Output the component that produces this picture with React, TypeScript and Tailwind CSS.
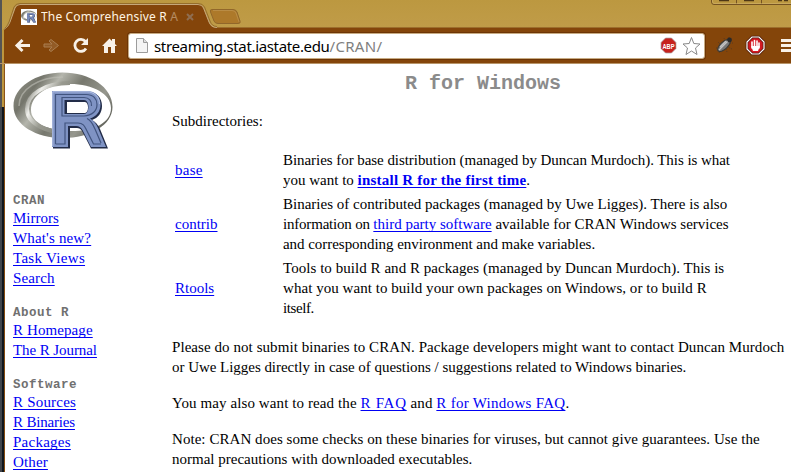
import type { ReactNode } from "react";

function Link({ children, className = "" }: { children: ReactNode; className?: string }) {
  return <a href="#" className={"text-[#0000f4] underline decoration-1 underline-offset-[2px] [text-decoration-skip-ink:none] " + className}>{children}</a>;
}

function Line({ children, className = "" }: { children: ReactNode; className?: string }) {
  return <div className={"h-5 whitespace-nowrap " + className}><span>{children}</span></div>;
}

function RLogo({ className, id }: { className: string; id: string }) {
  return (
    <svg className={className} viewBox="0 0 102 78" fill="none">
      <defs>
        <linearGradient id={id + "ring"} x1="10" y1="5" x2="90" y2="65" gradientUnits="userSpaceOnUse">
          <stop offset="0" stopColor="#8a8b80" />
          <stop offset=".15" stopColor="#74756b" />
          <stop offset=".3" stopColor="#b4b5ac" />
          <stop offset=".5" stopColor="#77786e" />
          <stop offset=".75" stopColor="#96978e" />
          <stop offset="1" stopColor="#55564e" />
        </linearGradient>
        <linearGradient id={id + "in"} x1="15" y1="20" x2="90" y2="60" gradientUnits="userSpaceOnUse">
          <stop offset="0" stopColor="#85867c" />
          <stop offset=".12" stopColor="#f0f0ec" />
          <stop offset=".3" stopColor="#999a90" />
          <stop offset="1" stopColor="#62635a" />
        </linearGradient>
      </defs>
      <path fillRule="evenodd" fill={"url(#" + id + "ring)"} d="M49.500 0.500C77 0.500 99.500 15 99.500 35C99.500 53 77 66 50 66C23 66 0.500 53 0.500 34C0.500 15 23 0.500 49.500 0.500ZM57 12C35 12 18 23 18 38C18 51 36 59 58 59C81 59 98 51 98 36C98 22 80 12 57 12Z" />
      <path stroke={"url(#" + id + "in)"} strokeWidth="4" d="M57 11C32 11 14 22 14 37C14 52 34 61 57 61" />
      <path stroke="#bfc0b8" strokeWidth="1.5" opacity=".6" d="M6 34C6 17 26 5 50 5" />
      <path fillRule="evenodd" fill="#222c48" d="M40 20H75C84 20 89 26 89 34C89 41 85 46 79 48C83 50 85 53 87 57L95 76.500H78L69 59C68 57 66 56 64 56H57V76.500H40ZM54 30V41H72C76 41 76 30 72 30Z" />
      <path fillRule="evenodd" fill="#7f93c4" d="M39 19H74C83 19 87.500 25 87.500 32.500C87.500 40 83 44.500 77 46.500C81 48.500 83 52 85 56L93 75H78L69.500 58C68 55.500 66 54 63 54H55V75H39ZM51.500 28V42H71C77 42 77 28 71 28Z" />
      <path stroke="#aebde2" strokeWidth="1" d="M39.800 74V19.800H74C81 19.800 86.500 25 86.500 32" />
      <path stroke="#41547f" strokeWidth="1.200" d="M42.500 72H52V51H65C70 51 71.500 54 73 57L80.500 72H88M42.500 72V22.500H73C80.500 22.500 84 27 84 32.500C84 39 79 43.500 71 44H49V25.500H71C76 25.500 79 29 78.500 34M74 46.500C79 49 80 53 82 57L88 71" />
    </svg>
  );
}

function TabStrip() {
  return (
    <div className="relative h-7 w-full">
      <svg className="absolute left-0 top-0" width="791" height="30" viewBox="0 0 791 30" fill="none">
        <defs>
          <linearGradient id="strip" x1="0" y1="0" x2="0" y2="1">
            <stop stopColor="#bc9840" /><stop offset="1" stopColor="#c09c49" />
          </linearGradient>
        </defs>
        <rect width="791" height="30" fill="url(#strip)" />
        <path d="M1 0V30" stroke="#555454" strokeWidth="2" />
        <path d="M5 27.500H791" stroke="#9c6f2d" />
        <rect x="5" y="28" width="786" height="2" fill="#84450a" />
        <path d="M4 30C7 28 8 26 10 22L15 8Q16.500 4.500 20 4.500H198Q202 4.500 203.500 8L209 22Q211 28 217 28V30Z" fill="#84450a" />
        <path d="M4 29C7 28 8 26 10 22L15 8Q16.500 4.500 20 4.500H198Q202 4.500 203.500 8L209 22Q211 27.500 217 27.500" stroke="#c5a77a" />
        <path d="M3.500 30C6 28 7 26 9 22L14 7Q15.500 3.500 20 3.500H198Q203 3.500 204.500 7L210 21Q212 26.500 217 26.500" stroke="#8b6224" strokeWidth=".8" />
        <path d="M212 9.500H233Q236 9.500 237 12L240 21Q241 23.500 238 23.500H218Q215 23.500 214 21L210.500 12Q209.500 9.500 212 9.500Z" fill="#ad792a" stroke="#91672a" />
        <path d="M213 10.500H232Q235 10.500 236 13L239 22" stroke="#bf9551" strokeWidth=".7" />
        <path d="M711.500 0V2Q711.500 4.500 714 4.500H791M736.500 0V4M761.500 0V4" stroke="#755322" />
        <path d="M712.500 0V2Q712.500 3.500 715 3.500H791" stroke="#d1b46d" strokeWidth=".6" />
        <path d="M719 .5H729M744 .5H754M778 .5H782M784 .5H788" stroke="#4d3616" strokeWidth="1.500" />
      </svg>
      <div className="relative flex h-[33px] items-center pl-[21px]">
        <div className="flex h-4 w-4 items-center justify-center bg-white"><RLogo id="fav" className="h-[15px] w-4" /></div>
        <div className="ml-1 w-[140px] overflow-hidden whitespace-nowrap font-['Noto_Sans',sans-serif] text-[12px] leading-4 tracking-[0.16px] text-[#fff4e3]">
          <span>The Comprehensive R <span className="opacity-40">A</span></span>
        </div>
        <svg className="ml-[5px]" width="8" height="8" viewBox="0 0 8 8"><path d="M1 1L7 7M7 1L1 7" stroke="#8f6e51" strokeWidth="2" /></svg>
      </div>
    </div>
  );
}

function Toolbar() {
  return (
    <div className="flex h-9 items-center border-b border-[#b79468] bg-[#84450a]">
      <svg className="shrink-0" width="128" height="35" viewBox="0 0 128 35" fill="none">
        <path d="M0 0H2V35H0Z" fill="#555454" />
        <path d="M2 0H4V35H2Z" fill="#bd963e" />
        <path d="M30 17.500H17M22.500 12L17 17.500L22.500 23" stroke="#f8f1e8" strokeWidth="3" />
        <path d="M44 16H52L49 13L51 11.500L58.500 17.500L51 23.500L49 22L52 19H44Z" fill="#925b26" stroke="#aa7e50" />
        <path d="M85.500 13.500A6 6 0 1 0 86 20.500" stroke="#f8f1e8" strokeWidth="2.800" />
        <path d="M88 10V17H81Z" fill="#f8f1e8" />
        <path d="M102 18L109.500 10.500L112 13V11H115V16L117 18H115V25H111V19H108V25H104V18Z" fill="#f8f1e8" />
      </svg>
      <div className="flex h-[26px] w-[577px] shrink-0 items-center rounded-[3px] border border-[#c7ab83] bg-white pl-[7px] shadow-[0_0_0_1px_#6d3505]">
        <svg width="12" height="16" viewBox="0 0 12 16"><path d="M.5 .5H7.500L11.500 4.500V14.500H.5Z" fill="#f4f4f4" stroke="#9c9c9c" /><path d="M7.500 .5V4.500H11.500" fill="#ddd" stroke="#9c9c9c" /></svg>
        <div className="ml-[6px] whitespace-nowrap font-['Noto_Sans',sans-serif] text-[15px] leading-6"><span className="tracking-[-0.34px]">streaming.stat.iastate.edu<span className="tracking-[0.3px] text-[#808080]">/CRAN/</span></span></div>
        <svg className="ml-auto" width="44" height="24" viewBox="0 0 44 24">
          <path d="M5.500 4H11.500L16 8.500V14.500L11.500 19H5.500L1 14.500V8.500Z" fill="#c7221d" stroke="#a8a8a8" strokeWidth=".7" />
          <text x="2.500" y="14.500" textLength="12" lengthAdjust="spacingAndGlyphs" fill="white" fontSize="8" fontWeight="bold" fontFamily="Liberation Sans, sans-serif">ABP</text>
          <path d="M31.500 3.500L33.800 9.500L40 10L35.500 14L37 20.500L31.500 17L26 20.500L27.500 14L23 10L29.200 9.500Z" fill="#fff" stroke="#888" />
        </svg>
      </div>
      <svg className="shrink-0" width="86" height="35" viewBox="705 0 86 35">
        <path d="M718 14L720 16M716 20L719 20M719 25L721 22M727 24L726 21M732 21L728 19M724 10L725 13M733 15L730 15M729 9L729 12" stroke="#5b3b20" strokeDasharray="1 1" />
        <ellipse cx="724" cy="17.500" rx="8" ry="3.600" transform="rotate(-43 724 17.500)" fill="#777" stroke="#3b3833" />
        <path d="M719 22L728 13M720 19L726 13" stroke="#c2c2c2" strokeWidth="1.200" />
        <circle cx="729.500" cy="12" r="2.400" fill="#292929" />
        <path d="M752 9H759L764 14V21L759 26H752L747 21V14Z" fill="#d41922" stroke="#4c1709" strokeWidth="2.600" />
        <path d="M752 9H759L764 14V21L759 26H752L747 21V14Z" stroke="#fff" fill="none" strokeWidth="1.200" />
        <path d="M752 14V20M754.500 12.500V20M757 13V20M759 15V20" stroke="white" strokeWidth="1.600" strokeLinecap="round" />
        <path d="M751.200 18H759.800L758 23H753Z" fill="white" />
        <path d="M781 12.500H791M781 17.500H791M781 22.500H791" stroke="#f8f1e8" strokeWidth="3" />
      </svg>
    </div>
  );
}

const sections = [
  {
    title: "CRAN",
    links: [
      { label: "Mirrors", spacing: "" },
      { label: "What's new?", spacing: "tracking-[0.16px]" },
      { label: "Task Views", spacing: "tracking-[0.3px]" },
      { label: "Search", spacing: "tracking-[0.15px]" },
    ],
  },
  {
    title: "About R",
    links: [
      { label: "R Homepage", spacing: "tracking-[0.1px]" },
      { label: "The R Journal", spacing: "tracking-[-0.08px]" },
    ],
  },
  {
    title: "Software",
    links: [
      { label: "R Sources", spacing: "tracking-[0.2px]" },
      { label: "R Binaries", spacing: "tracking-[-0.18px]" },
      { label: "Packages", spacing: "tracking-[0.25px]" },
      { label: "Other", spacing: "tracking-[0.15px]" },
    ],
  },
];

export default function App() {
  return (
    <div className="h-[472px] w-[791px] overflow-hidden bg-white text-black">
      <TabStrip />
      <Toolbar />
      <div className="flex h-[408px]">
        <div className="flex w-[5px] shrink-0 flex-col">
          <div className="h-[43px] border-l-2 border-r border-l-[#555454] border-r-[#8b5218] bg-[#bd963e]" />
          <div className="flex-1 border-l-2 border-r border-l-[#414449] border-r-[#844b10] bg-[#11171d]" />
        </div>
        <div className="flex w-[786px] font-['Liberation_Serif',serif] text-[15px] leading-5">
          <aside className="w-[167px] shrink-0 pl-2 pt-2">
            <RLogo id="main" className="h-[78px] w-[102px]" />
            <nav className="mt-[42px] flex flex-col gap-4">
              {sections.map((s) => (
                <section key={s.title}>
                  <h2 className="h-4 pt-px font-['Liberation_Mono',monospace] text-[12.5px] font-bold leading-4 tracking-[0.5px] text-[#707070]"><span>{s.title}</span></h2>
                  {s.links.map((l) => <Line key={l.label} className={l.spacing}><Link>{l.label}</Link></Line>)}
                </section>
              ))}
            </nav>
          </aside>
          <main className="w-[619px]">
            <h1 className="mt-2 h-6 pl-[233px] font-['Liberation_Mono',monospace] text-[20px] font-bold leading-6 text-[#8b8b8b]"><span>R for Windows</span></h1>
            <Line className="mt-[15px]">Subdirectories:</Line>
            <div className="mt-[19px] grid grid-cols-[108px_1fr] items-center gap-y-1 pl-[3px]">
              <Link className="tracking-[0.25px]">base</Link>
              <div>
                <Line className="tracking-[-0.055px]">Binaries for base distribution (managed by Duncan Murdoch). This is what</Line>
                <Line>you want to <b className="tracking-[0.22px]"><Link>install R for the first time</Link></b>.</Line>
              </div>
              <Link>contrib</Link>
              <div>
                <Line>Binaries of contributed packages (managed by Uwe Ligges). There is also</Line>
                <Line><span className="tracking-[-0.2px]">information on </span><Link>third party software</Link> available for CRAN Windows services</Line>
                <Line className="tracking-[-0.04px]">and corresponding environment and make variables.</Line>
              </div>
              <Link>Rtools</Link>
              <div>
                <Line className="tracking-[0.045px]">Tools to build R and R packages (managed by Duncan Murdoch). This is</Line>
                <Line className="tracking-[0.045px]">what you want to build your own packages on Windows, or to build R</Line>
                <Line className="tracking-[-0.4px]">itself.</Line>
              </div>
            </div>
            <div className="mt-[19px] flex flex-col gap-4">
              <div>
                <Line className="tracking-[0.065px]">Please do not submit binaries to CRAN. Package developers might want to contact Duncan Murdoch</Line>
                <Line className="tracking-[-0.035px]">or Uwe Ligges directly in case of questions / suggestions related to Windows binaries.</Line>
              </div>
              <Line className="tracking-[0.1px]">You may also want to read the <Link className="tracking-[0.7px]">R FAQ</Link> and <Link className="tracking-[0.28px]">R for Windows FAQ</Link>.</Line>
              <div>
                <Line className="tracking-[0.053px]">Note: CRAN does some checks on these binaries for viruses, but cannot give guarantees. Use the</Line>
                <Line>normal precautions with downloaded executables.</Line>
              </div>
            </div>
          </main>
        </div>
      </div>
    </div>
  );
}
